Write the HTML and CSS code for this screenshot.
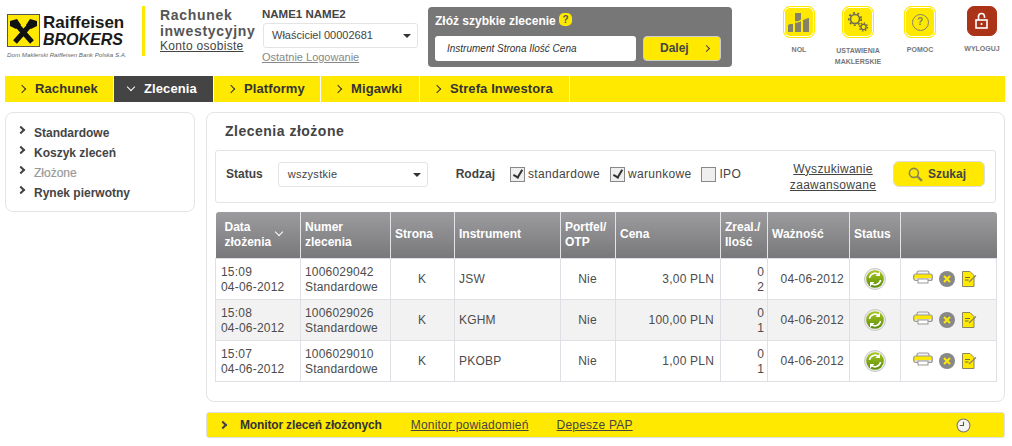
FILE: index.html
```html
<!DOCTYPE html>
<html lang="en">
<head>
    <meta charset="UTF-8">
    <title>Zlecenia złożone</title>
    <link rel="stylesheet" href="styles.css">
</head>
<body>
    <!-- Header -->
    <div class="header">
        <div class="logo">
            <div class="logo-top">
                <svg class="logo-mark" viewBox="0 0 33 33">
                    <rect x="0.5" y="0.5" width="32" height="32" fill="#ffe900" stroke="#555"/>
                    <path d="M9 10 L25 28 M24 10 L8 28" stroke="#111" stroke-width="5" fill="none"/>
                    <path d="M3 7 L10 5 L14 11 L9 15 L3 12 Z M30 7 L23 5 L19 11 L24 15 L30 12 Z" fill="#111"/>
                </svg>
                <div class="logo-words">
                    <div class="logo-name">Raiffeisen</div>
                    <div class="logo-brokers">BROKERS</div>
                </div>
            </div>
            <div class="logo-tag">Dom Maklerski Raiffeisen Bank Polska S.A.</div>
        </div>
        <div class="account">
            <div class="account-title">Rachunek<br>inwestycyjny</div>
            <a class="account-link">Konto osobiste</a>
        </div>
        <div class="user">
            <div class="user-name">NAME1 NAME2</div>
            <div class="select user-select">Właściciel 00002681<span class="caret"></span></div>
            <a class="last-login">Ostatnie Logowanie</a>
        </div>
        <div class="quick">
            <div class="quick-title">Złóż szybkie zlecenie <span class="quick-help">?</span></div>
            <div class="quick-row">
                <div class="quick-input">Instrument Strona Ilość Cena</div>
                <div class="quick-btn">Dalej <span class="chev chev-btn"></span></div>
            </div>
        </div>
        <div class="tools">
            <div class="tool tool-nol">
                <div class="tool-icon">
                    <svg viewBox="0 0 24 24" width="24" height="24">
                        <path d="M1 22V14h5v8zM8 22V3h6v19zM16 22V8h6v14z" fill="#85826a"/>
                        <path d="M0 15 C6 9 9 14 13 11 S20 8 24 6" stroke="#ffe900" stroke-width="1.5" fill="none"/>
                    </svg>
                </div>
                <div class="tool-label">NOL</div>
            </div>
            <div class="tool tool-settings">
                <div class="tool-icon">
                    <svg viewBox="0 0 22 22" width="22" height="22" fill="none" stroke="#6d6b50">
                        <circle cx="8" cy="8" r="4.5" stroke-width="1.6"/>
                        <circle cx="8" cy="8" r="6.2" stroke-width="1.8" stroke-dasharray="2 2.4"/>
                        <circle cx="16.5" cy="16" r="2.6" stroke-width="1.4"/>
                        <circle cx="16.5" cy="16" r="4" stroke-width="1.4" stroke-dasharray="1.5 1.6"/>
                    </svg>
                </div>
                <div class="tool-label">USTAWIENIA<br>MAKLERSKIE</div>
            </div>
            <div class="tool tool-help">
                <div class="tool-icon">
                    <div class="help-ring">?</div>
                </div>
                <div class="tool-label">POMOC</div>
            </div>
            <div class="tool tool-logout">
                <div class="tool-icon tool-icon-red">
                    <svg viewBox="0 0 16 18" width="16" height="18" fill="none" stroke="#fff" stroke-width="1.6">
                        <rect x="2" y="8" width="11" height="8"/>
                        <path d="M4.5 8V4.5a3 3 0 0 1 6 0V6"/>
                        <path d="M7.5 11v2"/>
                    </svg>
                </div>
                <div class="tool-label">WYLOGUJ</div>
            </div>
        </div>
    </div>

    <!-- Main nav -->
    <div class="nav">
        <a class="nav-item nav-1"><span class="chev"></span>Rachunek</a>
        <a class="nav-item nav-2 active"><span class="chev chev-down"></span>Zlecenia</a>
        <a class="nav-item nav-3"><span class="chev"></span>Platformy</a>
        <a class="nav-item nav-4"><span class="chev"></span>Migawki</a>
        <a class="nav-item nav-5"><span class="chev"></span>Strefa Inwestora</a>
    </div>

    <div class="page">
        <!-- Side menu -->
        <div class="side">
            <a class="side-item"><span class="chev"></span>Standardowe</a>
            <a class="side-item"><span class="chev"></span>Koszyk zleceń</a>
            <a class="side-item side-current"><span class="chev"></span>Złożone</a>
            <a class="side-item"><span class="chev"></span>Rynek pierwotny</a>
        </div>

        <div class="column">
            <div class="panel">
                <h1>Zlecenia złożone</h1>

                <div class="filter">
                    <span class="filter-label">Status</span>
                    <div class="select status-select">wszystkie<span class="caret"></span></div>
                    <span class="filter-label rodzaj">Rodzaj</span>
                    <label class="check checked">standardowe</label>
                    <label class="check checked">warunkowe</label>
                    <label class="check">IPO</label>
                    <a class="advanced">Wyszukiwanie<br>zaawansowane</a>
                    <div class="search-btn">
                        <svg viewBox="0 0 14 14" width="15" height="15" fill="none" stroke="#8a8650" stroke-width="1.5">
                            <circle cx="5.5" cy="5.5" r="4.2"/>
                            <path d="M8.6 8.6 L13 13" stroke-width="2.2"/>
                        </svg>
                        Szukaj
                    </div>
                </div>

                <table class="orders">
                    <colgroup>
                        <col class="c-date"><col class="c-num"><col class="c-side"><col class="c-inst">
                        <col class="c-port"><col class="c-price"><col class="c-qty"><col class="c-valid">
                        <col class="c-status"><col class="c-actions">
                    </colgroup>
                    <thead>
                        <tr>
                            <th class="sorted">Data<br>złożenia<span class="chev chev-down"></span></th>
                            <th>Numer<br>zlecenia</th>
                            <th>Strona</th>
                            <th>Instrument</th>
                            <th>Portfel/<br>OTP</th>
                            <th>Cena</th>
                            <th>Zreal./<br>Ilość</th>
                            <th>Ważność</th>
                            <th>Status</th>
                            <th></th>
                        </tr>
                    </thead>
                    <tbody>
                        <tr>
                            <td>15:09<br>04-06-2012</td>
                            <td>1006029042<br>Standardowe</td>
                            <td class="center">K</td>
                            <td>JSW</td>
                            <td class="center">Nie</td>
                            <td class="right price">3,00 PLN</td>
                            <td class="right qty">0<br>2</td>
                            <td class="right">04-06-2012</td>
                            <td class="center icon-cell"><svg class="status-icon" viewBox="0 0 22 22"><use href="#ico-status"/></svg></td>
                            <td class="acts"><svg class="act-print" viewBox="0 0 20 14"><use href="#ico-print"/></svg><svg class="act-x" viewBox="0 0 16 16"><use href="#ico-x"/></svg><svg class="act-note" viewBox="0 0 15 16"><use href="#ico-note"/></svg></td>
                        </tr>
                        <tr class="alt">
                            <td>15:08<br>04-06-2012</td>
                            <td>1006029026<br>Standardowe</td>
                            <td class="center">K</td>
                            <td>KGHM</td>
                            <td class="center">Nie</td>
                            <td class="right price">100,00 PLN</td>
                            <td class="right qty">0<br>1</td>
                            <td class="right">04-06-2012</td>
                            <td class="center icon-cell"><svg class="status-icon" viewBox="0 0 22 22"><use href="#ico-status"/></svg></td>
                            <td class="acts"><svg class="act-print" viewBox="0 0 20 14"><use href="#ico-print"/></svg><svg class="act-x" viewBox="0 0 16 16"><use href="#ico-x"/></svg><svg class="act-note" viewBox="0 0 15 16"><use href="#ico-note"/></svg></td>
                        </tr>
                        <tr>
                            <td>15:07<br>04-06-2012</td>
                            <td>1006029010<br>Standardowe</td>
                            <td class="center">K</td>
                            <td>PKOBP</td>
                            <td class="center">Nie</td>
                            <td class="right price">1,00 PLN</td>
                            <td class="right qty">0<br>1</td>
                            <td class="right">04-06-2012</td>
                            <td class="center icon-cell"><svg class="status-icon" viewBox="0 0 22 22"><use href="#ico-status"/></svg></td>
                            <td class="acts"><svg class="act-print" viewBox="0 0 20 14"><use href="#ico-print"/></svg><svg class="act-x" viewBox="0 0 16 16"><use href="#ico-x"/></svg><svg class="act-note" viewBox="0 0 15 16"><use href="#ico-note"/></svg></td>
                        </tr>
                    </tbody>
                </table>
            </div>

            <!-- Bottom bar -->
            <div class="monitor">
                <span class="chev"></span>
                <span class="monitor-title">Monitor zleceń złożonych</span>
                <a class="monitor-link">Monitor powiadomień</a>
                <a class="monitor-link">Depesze PAP</a>
                <svg class="clock" viewBox="0 0 14 14" fill="none">
                    <circle cx="7" cy="7" r="6" fill="#f4f4f0" stroke="#777"/>
                    <path d="M7 3.5V7H3.5" stroke="#555"/>
                </svg>
            </div>
        </div>
    </div>

    <!-- Shared icons -->
    <svg class="defs" width="0" height="0">
        <defs>
            <linearGradient id="grad-green" x1="0" y1="0" x2="0" y2="1">
                <stop offset="0" stop-color="#a9c81e"/>
                <stop offset="1" stop-color="#5a8c0c"/>
            </linearGradient>
            <g id="ico-status">
                <circle cx="11" cy="11" r="10.5" fill="#ececE8" stroke="#c8c8c8"/>
                <circle cx="11" cy="11" r="8.8" fill="url(#grad-green)"/>
                <path d="M5.5 10a5.5 5.5 0 0 1 9.5-3M16.5 12a5.5 5.5 0 0 1-9.5 3" stroke="#fff" stroke-width="1.6" fill="none"/>
                <path d="M16 3.5v4.500h-4.500zM6 18.500v-4.500h4.500z" fill="#fff"/>
            </g>
            <g id="ico-print">
                <path d="M4 4V2.500Q4 1 6 1H14Q16 1 16 2.500V4" fill="#f2f2f2" stroke="#999" stroke-width="1.200"/>
                <rect x="0.700" y="4" width="18.600" height="6.500" rx="2" fill="#ffe900" stroke="#999" stroke-width="1.200"/>
                <rect x="2" y="8" width="16" height="2" fill="#ddd"/>
                <rect x="5" y="9" width="10" height="4" fill="#fff" stroke="#999"/>
            </g>
            <g id="ico-x">
                <circle cx="8" cy="8" r="8" fill="#888"/>
                <path d="M5 5L11 11M11 5L5 11" stroke="#ffe900" stroke-width="2"/>
            </g>
            <g id="ico-note">
                <path d="M0.500 0.500H8L12 4.500V15.500H0.500Z" fill="#ffe900" stroke="#8a8660"/>
                <path d="M3 6.500H8M3 9H6.500" stroke="#6d6b50"/>
                <path d="M7 11L14 4.500" stroke="#8a8660" stroke-width="1.200"/>
            </g>
        </defs>
    </svg>
</body>
</html>
```

FILE: styles.css
```css
* {
    box-sizing: border-box;
}

body {
    margin: 0;
    padding: 0;
    background-color: #fff;
    color: #444;
    font-family: "Liberation Sans", Arial, sans-serif;
    font-size: 12px;
}

a {
    color: inherit;
}

.defs {
    display: block;
}

/* Chevrons */
.chev {
    display: inline-block;
    width: 6px;
    height: 6px;
    border-top: 2px solid currentColor;
    border-right: 2px solid currentColor;
    transform: rotate(45deg);
}

.chev-down {
    transform: rotate(135deg);
}

/* Header */
.header {
    display: flex;
    height: 76px;
}

.logo {
    width: 142px;
    padding: 14px 0 0 7px;
    flex-shrink: 0;
}

.logo-top {
    display: flex;
}

.logo-mark {
    width: 33px;
    height: 33px;
    flex-shrink: 0;
}

.logo-words {
    margin-left: 3px;
    color: #1a1a1a;
    font-weight: bold;
}

.logo-name {
    font-size: 17px;
    line-height: 17px;
}

.logo-brokers {
    font-size: 16px;
    line-height: 17px;
    font-style: italic;
}

.logo-tag {
    margin-top: 3px;
    font-size: 6.2px;
    font-style: italic;
    white-space: nowrap;
    color: #666;
}

.account {
    width: 120px;
    height: 50px;
    margin-top: 6px;
    padding: 1px 0 0 15px;
    border-left: 3px solid #ffe900;
    flex-shrink: 0;
}

.account-title {
    font-size: 14px;
    font-weight: bold;
    line-height: 16px;
    letter-spacing: 0.7px;
    color: #555;
    white-space: nowrap;
}

.account-link {
    text-decoration: underline;
    letter-spacing: 0.3px;
    line-height: 14px;
    display: block;
}

.user {
    width: 166px;
    padding-top: 7px;
    flex-shrink: 0;
}

.user-name {
    font-size: 11.5px;
    font-weight: bold;
    line-height: 14px;
    margin-bottom: 2px;
}

.select {
    position: relative;
    background-color: #fff;
    border: 1px solid #e4e4e4;
    border-radius: 3px;
    font-size: 11px;
}

.user-select {
    width: 155px;
    height: 25px;
    line-height: 23px;
    padding-left: 8px;
    margin-left: 1px;
}

.caret {
    position: absolute;
    right: 6px;
    top: 10px;
    border-left: 4px solid transparent;
    border-right: 4px solid transparent;
    border-top: 4px solid #333;
}

.last-login {
    display: block;
    margin-top: 3px;
    font-size: 11px;
    color: #888;
    text-decoration: underline;
}

.quick {
    width: 304px;
    height: 60px;
    margin-top: 7px;
    padding: 6px 7px 0;
    background-color: #777;
    border-radius: 4px;
    flex-shrink: 0;
}

.quick-title {
    color: #fff;
    font-weight: bold;
    line-height: 16px;
}

.quick-help {
    display: inline-block;
    width: 13px;
    height: 13px;
    border-radius: 5px;
    background-color: #ffe900;
    color: #555;
    font-size: 10px;
    line-height: 13px;
    text-align: center;
    vertical-align: 2px;
}

.quick-row {
    display: flex;
    margin-top: 7px;
}

.quick-input {
    width: 201px;
    height: 25px;
    padding-left: 12px;
    line-height: 25px;
    background-color: #fff;
    border-radius: 3px;
    font-size: 10px;
    font-style: italic;
    color: #333;
}

.quick-btn {
    width: 78px;
    height: 25px;
    margin-left: 7px;
    padding-left: 16px;
    line-height: 23px;
    background-color: #ffe900;
    border: 1px solid #ccc;
    border-radius: 4px;
    font-weight: bold;
    color: #444;
}

.chev-btn {
    width: 5px;
    height: 5px;
    margin: 0 0 1px 12px;
    border-width: 1.5px 1.5px 0 0;
    vertical-align: middle;
}

.tools {
    display: flex;
    flex-grow: 1;
    padding-top: 6px;
    margin-left: 37px;
}

.tool {
    text-align: center;
    flex-shrink: 0;
}

.tool-nol { width: 60px; }
.tool-settings { width: 58px; }
.tool-help { width: 66px; }
.tool-logout { width: 58px; }

.tool-icon {
    display: flex;
    align-items: center;
    justify-content: center;
    width: 32px;
    height: 32px;
    margin: 0 auto;
    background-color: #ffe900;
    border: 1px solid #ffe900;
    border-radius: 7px;
    box-shadow: inset 0 0 0 1px #fff;
}

.tool-icon-red {
    width: 30px;
    height: 30px;
    background-color: #ab3318;
    border-color: #ab3318;
    box-shadow: none;
}

.help-ring {
    width: 17px;
    height: 17px;
    border: 1.5px solid #85826a;
    border-radius: 50%;
    color: #85826a;
    font-size: 10px;
    font-weight: bold;
    line-height: 14px;
}

.tool-label {
    margin-top: 6px;
    font-size: 7px;
    font-weight: bold;
    line-height: 11px;
    color: #777;
    white-space: nowrap;
}

.tool-settings .tool-label {
    margin-top: 7px;
}

.tool-logout .tool-label {
    margin-top: 7px;
}

/* Main nav */
.nav {
    display: flex;
    height: 26px;
    margin: 0 7px 0 5px;
    background-color: #ffe900;
}

.nav-item {
    display: block;
    padding-left: 14px;
    border-right: 1px solid #fff;
    line-height: 26px;
    font-size: 13px;
    font-weight: bold;
    letter-spacing: 0.1px;
    color: #333;
    white-space: nowrap;
}

.nav-item .chev {
    width: 6px;
    height: 6px;
    margin: 0 10px 1px 0;
    border-width: 1.5px 1.5px 0 0;
}

.nav-1 { width: 109px; }
.nav-2 { width: 100px; }
.nav-3 { width: 107px; }
.nav-4 { width: 99px; }
.nav-5 { width: 150px; }

.nav-item.active {
    background-color: #444;
    color: #fff;
}

.nav-item.active .chev {
    margin: 0 10px 3px 0;
}

/* Page */
.page {
    display: flex;
    align-items: flex-start;
    margin: 10px 7px 0 5px;
}

.side {
    width: 190px;
    height: 100px;
    padding: 10px 0 0 12px;
    border: 1px solid #e4e4e4;
    border-radius: 8px;
    flex-shrink: 0;
}

.side-item {
    display: block;
    height: 20px;
    line-height: 20px;
    font-weight: bold;
    color: #444;
}

.side-item .chev {
    width: 6px;
    height: 6px;
    margin: 0 10px 4px 0;
}

.side-current {
    color: #999;
    font-weight: normal;
    -webkit-text-stroke: 0.2px #999;
}

.side-current .chev {
    color: #444;
}

.column {
    width: 799px;
    margin-left: 11px;
}

.panel {
    height: 290px;
    padding: 0 8px;
    border: 1px solid #e4e4e4;
    border-radius: 8px;
}

h1 {
    margin: 0;
    padding: 10px 0 0 10px;
    height: 37px;
    font-size: 14px;
    font-weight: bold;
    line-height: 17px;
    letter-spacing: 0.5px;
    color: #444;
}

.filter {
    display: flex;
    align-items: center;
    height: 53px;
    padding: 0 0 5px 10px;
    border: 1px solid #e4e4e4;
    border-radius: 3px;
}

.filter-label {
    font-weight: bold;
    color: #444;
}

.status-select {
    width: 150px;
    height: 25px;
    margin-left: 15px;
    padding-left: 9px;
    line-height: 23px;
    letter-spacing: 0.3px;
}

.rodzaj {
    margin-left: 28px;
}

.check {
    position: relative;
    margin-left: 15px;
    padding-left: 18px;
    letter-spacing: 0.3px;
    color: #444;
}

.check + .check {
    margin-left: 10px;
}

.check::before {
    content: "";
    position: absolute;
    left: 0;
    top: 0;
    width: 13px;
    height: 13px;
    border: 1px solid #888;
    background-color: #efefef;
}

.check.checked::after {
    content: "";
    position: absolute;
    left: 5px;
    top: 1px;
    width: 4px;
    height: 8px;
    border: solid #333;
    border-width: 0 2px 2px 0;
    transform: rotate(30deg);
}

.advanced {
    width: 90px;
    margin: 5px 0 0 47px;
    text-align: center;
    text-decoration: underline;
    line-height: 16px;
    letter-spacing: 0.3px;
    color: #444;
}

.search-btn {
    display: flex;
    align-items: center;
    gap: 5px;
    width: 92px;
    height: 26px;
    margin-left: 15px;
    padding-left: 14px;
    background-color: #ffe900;
    border: 1px solid #ddd;
    border-radius: 6px;
    font-weight: bold;
    color: #444;
}

/* Orders table */
.orders {
    width: 781px;
    margin-top: 9px;
    border-collapse: collapse;
    table-layout: fixed;
}

.c-date { width: 85px; }
.c-num { width: 90px; }
.c-side { width: 64px; }
.c-inst { width: 106px; }
.c-port { width: 55px; }
.c-price { width: 105px; }
.c-qty { width: 47px; }
.c-valid { width: 82px; }
.c-status { width: 51px; }
.c-actions { width: 96px; }

.orders th {
    position: relative;
    height: 46px;
    padding: 0 0 0 4px;
    background: linear-gradient(#9c9c9f, #78787b);
    border-left: 1px solid #e4e4e8;
    color: #fff;
    font-size: 12px;
    font-weight: bold;
    line-height: 15px;
    text-align: left;
}

.orders th:first-child {
    padding-left: 9px;
    border-left: 0;
    border-top-left-radius: 3px;
}

.orders th:last-child {
    border-top-right-radius: 3px;
}

.orders th .chev {
    position: absolute;
    right: 18px;
    top: 17px;
    width: 6px;
    height: 6px;
    border-width: 1.5px 1.5px 0 0;
}

.orders td {
    height: 41px;
    padding: 2px 5px 0 4px;
    border: 1px solid #dfdfe6;
    color: #4c4c4c;
    line-height: 15px;
    letter-spacing: 0.2px;
    white-space: nowrap;
}

.orders td:first-child {
    padding-left: 5px;
}

.orders .alt td {
    background-color: #f2f2f2;
}

.orders .center {
    text-align: center;
}

.orders .right {
    text-align: right;
}

.orders .price {
    padding-right: 6px;
}

.orders .qty {
    padding-right: 3px;
}

.orders .icon-cell {
    padding-top: 0;
}

.status-icon {
    display: block;
    width: 22px;
    height: 22px;
    margin: 0 auto;
}

.orders .acts {
    padding: 0 0 0 12px;
}

.acts svg {
    vertical-align: middle;
}

.act-print {
    width: 20px;
    height: 14px;
    margin: 0 6px 3px 0;
}

.act-x {
    width: 16px;
    height: 16px;
    margin-right: 7px;
}

.act-note {
    width: 15px;
    height: 16px;
}

/* Bottom bar */
.monitor {
    display: flex;
    align-items: center;
    height: 26px;
    margin-top: 10px;
    padding-left: 13px;
    background-color: #ffe900;
    border: 1px solid #e0e0e0;
    border-radius: 3px;
    color: #444;
}

.monitor .chev {
    width: 6px;
    height: 6px;
}

.monitor-title {
    margin-left: 14px;
    font-weight: bold;
    letter-spacing: -0.15px;
    color: #333;
}

.monitor-link {
    margin-left: 28px;
    text-decoration: underline;
    letter-spacing: 0.2px;
}

.monitor-title + .monitor-link {
    margin-left: 29px;
}

.clock {
    width: 15px;
    height: 15px;
    margin-left: auto;
    margin-right: 33px;
}
```
